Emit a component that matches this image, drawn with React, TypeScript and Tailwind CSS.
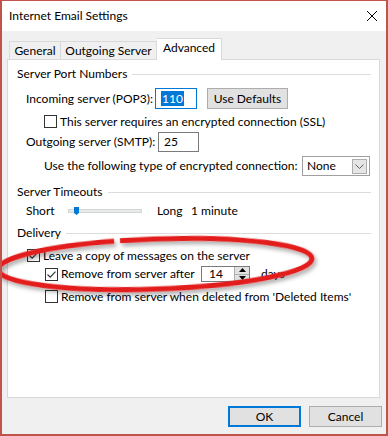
import React from 'react';

type BoxProps = { checked?: boolean };

const CheckBox: React.FC<BoxProps> = ({ checked }) => (
  <span className="flex h-[13px] w-[13px] shrink-0 items-center justify-center border border-[#333333] bg-white">
    {checked && (
      <svg width="11" height="11" viewBox="0 0 11 11">
        <path d="M1.5 5.5 L4.2 8.2 L9.5 2.6" fill="none" stroke="#333333" strokeWidth="1.2" />
      </svg>
    )}
  </span>
);

const GroupHeader: React.FC<{ label: string; className: string }> = ({ label, className }) => (
  <div className={`flex h-4 items-center pl-[9px] pr-2 ${className}`}>
    <span>{label}</span>
    <span className="ml-[5px] h-px flex-1 bg-[#dcdcdc]" />
  </div>
);

export default function App() {
  return (
    <div className="relative h-[436px] w-[388px] overflow-hidden whitespace-nowrap border-x-2 border-b-2 border-t border-[#c0544b] bg-[#f0f0f0] font-['Lato',sans-serif] text-[12px] leading-4 text-black">
      {/* title bar */}
      <div className="flex h-[30px] items-center justify-between bg-white pl-[7px] pr-[9px]">
        <span>Internet Email Settings</span>
        <svg width="10" height="10" viewBox="0 0 10 10">
          <path d="M0 0 L10 10 M10 0 L0 10" stroke="#000" strokeWidth="1" />
        </svg>
      </div>

      {/* tabs */}
      <div className="relative z-10 mt-[7px] flex h-[21px] items-end pl-[7px]">
        <div className="flex h-[18px] w-[52px] items-center justify-center border border-b-0 border-[#d9d9d9] bg-[#f0f0f0]">
          General
        </div>
        <div className="flex h-[18px] w-[96px] items-center justify-center border border-b-0 border-l-0 border-[#d9d9d9] bg-[#f0f0f0]">
          Outgoing Server
        </div>
        <div className="-mb-px flex h-[22px] w-[65px] items-start justify-center border border-b-0 border-l-0 border-[#d9d9d9] bg-white pt-[1px]">
          Advanced
        </div>
      </div>

      {/* panel */}
      <div className="ml-[5px] flex h-[339px] w-[373px] flex-col border border-[#d9d9d9] bg-white">
        <GroupHeader label="Server Port Numbers" className="mt-[6px]" />

        <div className="mt-[6px] flex h-[21px] items-center pl-[18px]">
          <span className="w-[129px] shrink-0">Incoming server (POP3):</span>
          <div className="flex h-[21px] w-[42px] items-center border border-[#0078d7] bg-white pl-[5px]">
            <span className="bg-[#0078d7] px-px leading-[15px] text-white">110</span>
          </div>
          <div className="ml-[10px] flex h-[21px] w-[81px] items-center justify-center border border-[#adadad] bg-[#e1e1e1]">
            Use Defaults
          </div>
        </div>

        <div className="mt-[6px] flex h-[13px] items-center pl-[36px]">
          <CheckBox />
          <span className="ml-[3px]">This server requires an encrypted connection (SSL)</span>
        </div>

        <div className="mt-[4px] flex h-[20px] items-center pl-[18px]">
          <span className="w-[132px] shrink-0">Outgoing server (SMTP):</span>
          <div className="flex h-[20px] w-[41px] items-center border border-[#7a7a7a] bg-white pl-[5px]">25</div>
        </div>

        <div className="mt-[4px] flex h-[20px] items-center pl-[36px]">
          <span className="w-[258px] shrink-0">Use the following type of encrypted connection:</span>
          <div className="flex h-[20px] w-[68px] items-center justify-between border border-[#a0a0a0] bg-white pl-[4px] pr-[2px]">
            <span>None</span>
            <span className="flex h-[15px] w-[15px] items-center justify-center border border-[#adadad] bg-[#e5e5e5]">
              <svg width="9" height="5" viewBox="0 0 9 5">
                <path d="M0.5 0.5 L4.5 4.5 L8.5 0.5" fill="none" stroke="#606060" strokeWidth="1" />
              </svg>
            </span>
          </div>
        </div>

        <GroupHeader label="Server Timeouts" className="mt-[8px]" />

        <div className="mt-[3px] flex h-4 items-center pl-[18px]">
          <span className="w-[42px] shrink-0">Short</span>
          <div className="relative h-[4px] w-[74px] border border-[#d6d6d6] bg-[#e7eaea]">
            <svg className="absolute -top-[3px] left-[5px]" width="5" height="8" viewBox="0 0 5 8">
              <path d="M0 0 H5 V6 L2.5 8 L0 6 Z" fill="#0078d7" />
            </svg>
          </div>
          <span className="ml-[15px] w-[34px] shrink-0">Long</span>
          <span>1 minute</span>
        </div>

        <GroupHeader label="Delivery" className="mt-[6px]" />

        <div className="mt-[8px] flex h-[13px] items-center pl-[19px]">
          <CheckBox checked />
          <span className="ml-[3px]">Leave a copy of messages on the server</span>
        </div>

        <div className="mt-[4px] flex h-4 items-center pl-[37px]">
          <CheckBox checked />
          <span className="ml-[3px] w-[140px] shrink-0">Remove from server after</span>
          <div className="flex h-4 items-center border border-[#7a7a7a] bg-white">
            <span className="w-[32px] pl-[7px]">14</span>
            <div className="flex h-[14px] w-[15px] flex-col border-l border-[#adadad]">
              <span className="flex flex-1 items-center justify-center border-b border-[#adadad] bg-[#e1e1e1]">
                <svg width="7" height="4" viewBox="0 0 7 4">
                  <path d="M0 4 L3.5 0 L7 4 Z" fill="#000" />
                </svg>
              </span>
              <span className="flex flex-1 items-center justify-center bg-[#e1e1e1]">
                <svg width="7" height="4" viewBox="0 0 7 4">
                  <path d="M0 0 L7 0 L3.5 4 Z" fill="#000" />
                </svg>
              </span>
            </div>
          </div>
          <span className="ml-[11px]">days</span>
        </div>

        <div className="mt-[8px] flex h-[13px] items-center pl-[37px]">
          <CheckBox />
          <span className="ml-[3px]">Remove from server when deleted from 'Deleted Items'</span>
        </div>
      </div>

      {/* buttons */}
      <div className="mt-[8px] flex justify-end gap-[8px] pr-[4px]">
        <div className="flex h-[21px] w-[73px] items-center justify-center border-2 border-[#0078d7] bg-[#e1e1e1]">
          OK
        </div>
        <div className="flex h-[21px] w-[73px] items-center justify-center border border-[#adadad] bg-[#e1e1e1]">
          Cancel
        </div>
      </div>

      {/* red highlight ellipse drawn over the dialog */}
      <svg className="pointer-events-none absolute -left-[2px] -top-px" width="388" height="436" viewBox="0 0 388 436">
        <defs>
          <filter id="shadow" x="-10%" y="-50%" width="120%" height="200%">
            <feDropShadow dx="2" dy="3" stdDeviation="2" floodColor="#000" floodOpacity="0.35" />
          </filter>
        </defs>
        <ellipse
          cx="155"
          cy="264"
          rx="157"
          ry="25"
          transform="rotate(-2 155 264)"
          fill="none"
          stroke="#e31c1c"
          strokeWidth="5"
          pathLength={1000}
          strokeDasharray="688 9 303"
          filter="url(#shadow)"
        />
      </svg>
    </div>
  );
}
